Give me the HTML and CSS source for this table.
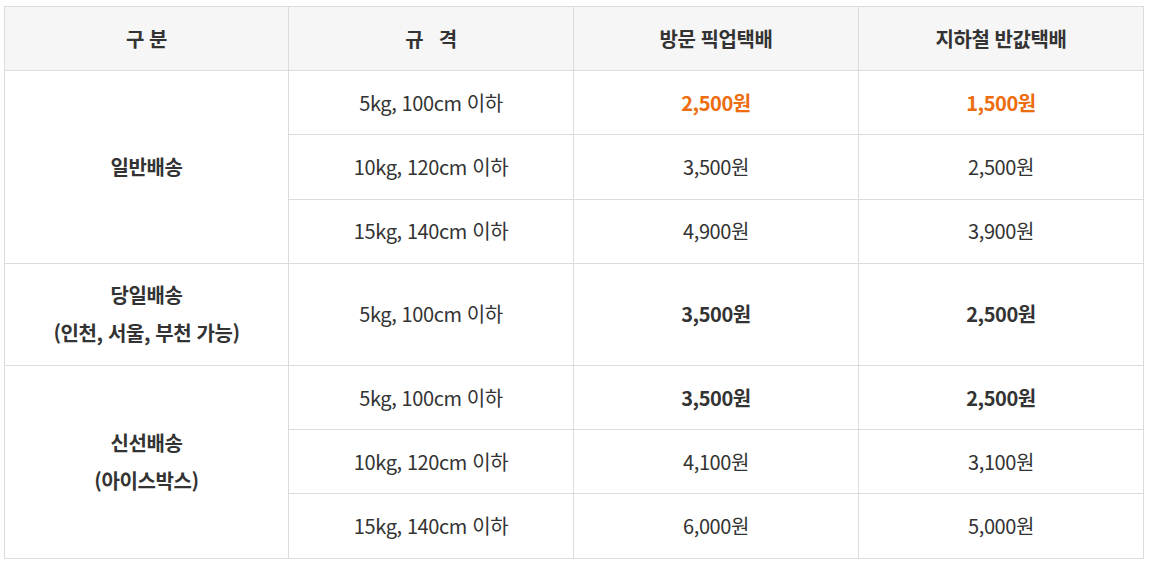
FILE: index.html
```html
<!DOCTYPE html>
<html lang="ko">
<head>
<meta charset="utf-8">
<link rel="stylesheet" href="styles.css">
</head>
<body>
<table class="price">
  <colgroup><col class="c1"><col class="cn"><col class="cn"><col class="cn"></colgroup>
  <thead>
    <tr><th>구 분</th><th>규&nbsp;&nbsp;&nbsp;격</th><th>방문 픽업택배</th><th>지하철 반값택배</th></tr>
  </thead>
  <tbody>
    <tr><td class="cat" rowspan="3">일반배송</td><td>5kg, 100cm 이하</td><td class="hl">2,500원</td><td class="hl">1,500원</td></tr>
    <tr><td>10kg, 120cm 이하</td><td>3,500원</td><td>2,500원</td></tr>
    <tr><td>15kg, 140cm 이하</td><td>4,900원</td><td>3,900원</td></tr>
    <tr><td class="cat">당일배송<br>(인천, 서울, 부천 가능)</td><td>5kg, 100cm 이하</td><td class="b">3,500원</td><td class="b">2,500원</td></tr>
    <tr><td class="cat" rowspan="3">신선배송<br>(아이스박스)</td><td>5kg, 100cm 이하</td><td class="b">3,500원</td><td class="b">2,500원</td></tr>
    <tr><td>10kg, 120cm 이하</td><td>4,100원</td><td>3,100원</td></tr>
    <tr><td>15kg, 140cm 이하</td><td>6,000원</td><td>5,000원</td></tr>
  </tbody>
</table>
</body>
</html>
```
FILE: styles.css
```css
html, body { margin: 0; padding: 0; background: #fff; }
body { padding: 6px 7px 0 4px; font-family: "Noto Sans CJK KR", "Noto Sans", sans-serif; color: #333; }
.price { width: 1140px; border-collapse: collapse; table-layout: fixed; font-size: 20px; line-height: 38px; }
.price col.c1 { width: 284px; }
.price col.cn { width: 285px; }
.price th, .price td { border: 1px solid #dcdcdc; text-align: center; vertical-align: middle; padding: 12.6px 0; letter-spacing: -0.4px; }
.price th { background: #f6f6f6; font-weight: 700; color: #333; }
.price td { font-weight: 400; }
.price td.cat { font-weight: 700; }
.price td.b { font-weight: 700; }
.price td.hl { font-weight: 700; color: #ec6c0e; }
```
